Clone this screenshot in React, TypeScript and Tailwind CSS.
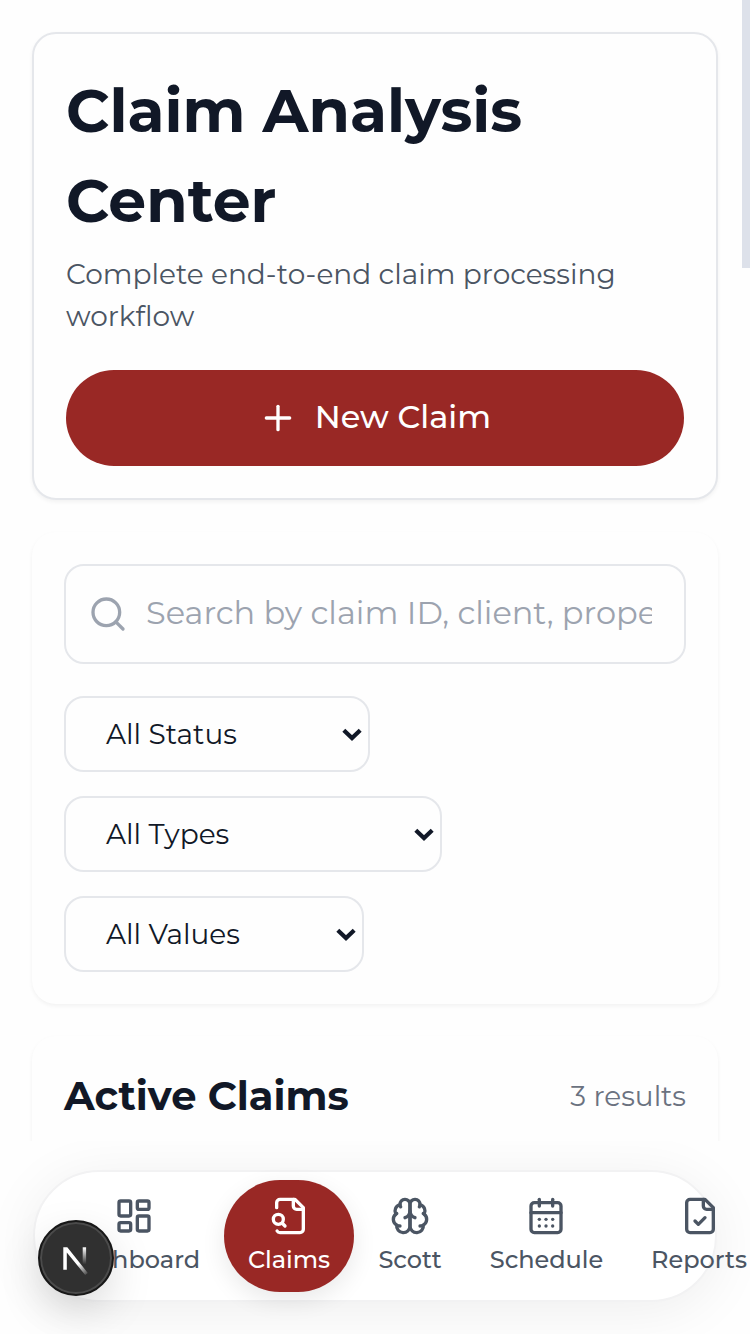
import type { ReactNode } from "react";

function Icon({ children, className }: { children: ReactNode; className: string }) {
  return (
    <svg
      viewBox="0 0 24 24"
      fill="none"
      stroke="currentColor"
      strokeWidth="2"
      strokeLinecap="round"
      strokeLinejoin="round"
      className={className}
    >
      {children}
    </svg>
  );
}

const icons = {
  dashboard: (
    <>
      <rect width="7" height="9" x="3" y="3" rx="1" />
      <rect width="7" height="5" x="14" y="3" rx="1" />
      <rect width="7" height="9" x="14" y="12" rx="1" />
      <rect width="7" height="5" x="3" y="16" rx="1" />
    </>
  ),
  claims: (
    <>
      <path d="M14 2v4a2 2 0 0 0 2 2h4" />
      <path d="M4.268 21a2 2 0 0 0 1.727 1H18a2 2 0 0 0 2-2V7l-5-5H6a2 2 0 0 0-2 2v3" />
      <path d="m9 18-1.5-1.5" />
      <circle cx="5" cy="14" r="3" />
    </>
  ),
  brain: (
    <>
      <path d="M12 5a3 3 0 1 0-5.997.125 4 4 0 0 0-2.526 5.77 4 4 0 0 0 .556 6.588A4 4 0 1 0 12 18Z" />
      <path d="M12 5a3 3 0 1 1 5.997.125 4 4 0 0 1 2.526 5.77 4 4 0 0 1-.556 6.588A4 4 0 1 1 12 18Z" />
      <path d="M15 13a4.5 4.5 0 0 1-3-4 4.5 4.5 0 0 1-3 4" />
      <path d="M17.599 6.5a3 3 0 0 0 .399-1.375" />
      <path d="M6.003 5.125A3 3 0 0 0 6.401 6.5" />
      <path d="M3.477 10.896a4 4 0 0 1 .585-.396" />
      <path d="M19.938 10.5a4 4 0 0 1 .585.396" />
      <path d="M6 18a4 4 0 0 1-1.967-.516" />
      <path d="M19.967 17.484A4 4 0 0 1 18 18" />
    </>
  ),
  calendar: (
    <>
      <path d="M8 2v4" />
      <path d="M16 2v4" />
      <rect width="18" height="18" x="3" y="4" rx="2" />
      <path d="M3 10h18" />
      <path d="M8 14h.01" />
      <path d="M12 14h.01" />
      <path d="M16 14h.01" />
      <path d="M8 18h.01" />
      <path d="M12 18h.01" />
      <path d="M16 18h.01" />
    </>
  ),
  report: (
    <>
      <path d="M15 2H6a2 2 0 0 0-2 2v16a2 2 0 0 0 2 2h12a2 2 0 0 0 2-2V7Z" />
      <path d="M14 2v4a2 2 0 0 0 2 2h4" />
      <path d="m9 15 2 2 4-4" />
    </>
  ),
};

const navItems = [
  {
    label: "Dashboard",
    icon: icons.dashboard,
    box: "w-[180px] text-[#4b5563]",
    iconClass: "size-10",
    labelClass: "mr-0.5",
  },
  {
    label: "Claims",
    icon: icons.claims,
    box: "w-[130px] bg-[#992825] text-white shadow-[0_8px_24px_rgba(0,0,0,0.09)]",
    iconClass: "size-10 ml-0.5",
    labelClass: "",
  },
  {
    label: "Scott",
    icon: icons.brain,
    box: "w-[112px] text-[#4b5563]",
    iconClass: "size-10",
    labelClass: "",
  },
  {
    label: "Schedule",
    icon: icons.calendar,
    box: "w-[161px] text-[#4b5563]",
    iconClass: "size-10 mr-px",
    labelClass: "",
  },
  {
    label: "Reports",
    icon: icons.report,
    box: "w-[145px] text-[#4b5563]",
    iconClass: "size-10 ml-px",
    labelClass: "mr-px",
  },
];

const filters = [
  { label: "All Status", width: "w-[306px]" },
  { label: "All Types", width: "w-[378px]" },
  { label: "All Values", width: "w-[300px]" },
];

export default function App() {
  return (
    <div className="relative flex h-[1334px] w-[750px] flex-col overflow-hidden bg-[#fefefe] font-['Montserrat','Inter',sans-serif] text-[#111827]">
      <main className="flex h-[1141px] flex-col gap-8 overflow-hidden px-8 pt-8">
        <section className="h-[468px] w-[686px] shrink-0 rounded-[24px] border-2 border-[#e5e7eb] bg-[#fefefe] p-8 shadow-[0_2px_4px_rgba(0,0,0,0.05)]">
          <h1 className="text-[60px] leading-[90px] font-bold">
            <span className="block whitespace-nowrap">Claim Analysis</span>
            <span className="block">Center</span>
          </h1>
          <p className="mt-[7px] text-[28px] leading-[42px] text-[#4b5563]">
            <span className="block whitespace-nowrap">Complete end-to-end claim processing</span>
            <span className="block">workflow</span>
          </p>
          <button className="mt-[33px] flex h-24 w-[618px] items-center justify-center rounded-full bg-[#992825] text-white">
            <Icon className="mr-[17px] size-10">
              <path d="M5 12h14" />
              <path d="M12 5v14" />
            </Icon>
            <span className="-mt-0.5 mr-px text-[32px] font-medium">New Claim</span>
          </button>
        </section>

        <section className="h-[472px] w-[686px] shrink-0 rounded-[24px] bg-[#fefefe] px-8 pt-8 shadow-[0_2px_4px_rgba(0,0,0,0.05)]">
          <label className="flex h-[100px] w-[622px] items-center rounded-[20px] border-2 border-[#e5e7eb] pl-[22px]">
            <Icon className="size-10 text-[#9ca3af]">
              <circle cx="11" cy="11" r="8" />
              <path d="m21 21-4.3-4.3" />
            </Icon>
            <span className="-mt-0.5 ml-[18px] w-[506px] overflow-hidden text-[32px] leading-[46px] whitespace-nowrap text-[#9ca3af]">
              Search by claim ID, client, prope
            </span>
          </label>
          <div className="mt-8 flex flex-col gap-6">
            {filters.map((f) => (
              <button
                key={f.label}
                className={`flex h-[76px] items-center justify-between rounded-[20px] border-2 border-[#e5e7eb] pr-[6px] pl-10 text-[28px] ${f.width}`}
              >
                <span>{f.label}</span>
                <svg viewBox="0 0 20 14" className="mt-0.5 h-[14px] w-5" fill="none" stroke="currentColor" strokeWidth="4.2">
                  <path d="M1.8 2.3 10 10.1l8.2-7.8" />
                </svg>
              </button>
            ))}
          </div>
        </section>

        <section className="flex h-[300px] w-[686px] shrink-0 items-start justify-between rounded-[24px] bg-[#fefefe] px-8 pt-[30px] shadow-[0_2px_4px_rgba(0,0,0,0.05)]">
          <h2 className="text-[40px] leading-[60px] font-bold">Active Claims</h2>
          <span className="text-[28px] leading-[60px] text-[#6b7280]">3 results</span>
        </section>
      </main>

      <div className="flex grow items-start overflow-hidden px-[33px] pt-[29px]">
        <nav className="flex h-[132px] w-[684px] shrink-0 rounded-[66px] border-2 border-[#f2f2f3] bg-white pt-2 pl-[9px] shadow-[0_8px_56px_rgba(0,0,0,0.065)]">
          {navItems.map((item) => (
            <a
              key={item.label}
              className={`flex h-28 shrink-0 flex-col items-center rounded-[56px] pt-4 ${item.box}`}
            >
              <Icon className={item.iconClass}>{item.icon}</Icon>
              <span className={`mt-2 text-[24px] leading-8 font-medium ${item.labelClass}`}>{item.label}</span>
            </a>
          ))}
        </nav>
      </div>

      <div className="absolute top-0 right-0 h-[268px] w-2 bg-[#dde1ea]" />

      <div className="absolute top-[1220px] left-[38px] flex size-[76px] items-center justify-center rounded-full border-2 border-[#171717] bg-[#303030] shadow-[inset_0_0_0_2px_#4b4b4b,0_16px_48px_-8px_rgba(0,0,0,0.22)]">
        <svg viewBox="0 0 25 28" className="mt-[5px] mr-px h-7 w-[25px]" fill="none">
          <defs>
            <linearGradient id="stem" x1="0" y1="0" x2="0" y2="1">
              <stop stopColor="#fff" />
              <stop offset="1" stopColor="#fff" stopOpacity="0" />
            </linearGradient>
            <linearGradient id="slash" gradientUnits="userSpaceOnUse" x1="15" y1="17" x2="25" y2="29">
              <stop stopColor="#fff" />
              <stop offset="1" stopColor="#fff" stopOpacity="0" />
            </linearGradient>
          </defs>
          <rect x="19.7" y="0.3" width="3.4" height="17" fill="url(#stem)" />
          <path d="M0.3 0.3h4L24.8 26l-2.6 2L3.8 5.4V22.8H0.3Z" fill="url(#slash)" />
        </svg>
      </div>
    </div>
  );
}
